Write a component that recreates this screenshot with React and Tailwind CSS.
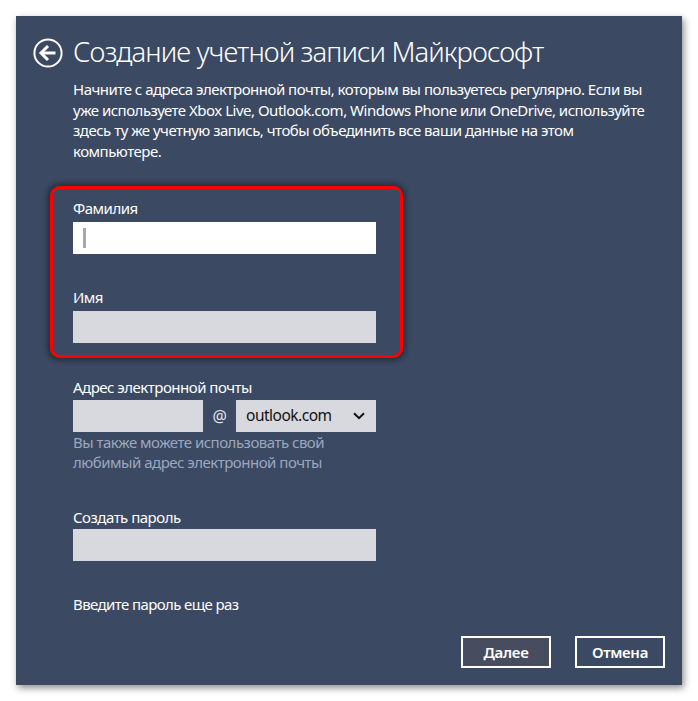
export default function App() {
  const font = { fontFamily: '"Noto Sans", "Open Sans", sans-serif' };
  return (
    <div className="w-[698px] h-[701px] bg-white pt-4 pl-4" style={font}>
      <div className="w-[666px] h-[669px] bg-[#3b4962] shadow-[2px_3px_7px_rgba(0,0,0,0.45)] flex flex-col text-white">
        <div className="flex items-center pl-[17px] pt-[18px]">
          <svg width="30" height="30" viewBox="0 0 30 30" className="mt-[2px]">
            <circle cx="15" cy="15" r="13.6" fill="none" stroke="white" strokeWidth="2" />
            <path d="M8 15 H22.5" stroke="white" strokeWidth="3" fill="none" />
            <path d="M15 8 L8 15 L15 22" stroke="white" strokeWidth="3" fill="none" strokeLinejoin="miter" />
          </svg>
          <h1 className="ml-[10px] text-[27.5px] leading-[36px] font-light tracking-[-0.9px] whitespace-nowrap">Создание учетной записи Майкрософт</h1>
        </div>
        <p className="pl-[57px] mt-[9px] text-[15px] leading-[20.5px] tracking-[-0.5px] whitespace-nowrap">
          Начните с адреса электронной почты, которым вы пользуетесь регулярно. Если вы
          <br />
          уже используете Xbox Live, Outlook.com, Windows Phone или OneDrive, используйте
          <br />
          здесь ту же учетную запись, чтобы объединить все ваши данные на этом
          <br />
          компьютере.
        </p>
        <div className="ml-[34px] mt-[25px] w-[353px] border-[3px] border-[#ff0000] rounded-[10px] pl-[20px] pr-[24px] pt-[9px] pb-[12px] shadow-[0_0_6px_2px_rgba(0,0,0,0.45)]">
          <div className="text-[15px] leading-[20px] tracking-[-0.5px]">Фамилия</div>
          <div className="mt-[4px] h-[32px] bg-white flex items-center pl-[10px]">
            <div className="w-[3px] h-[20px] bg-[#a8a8a8]" />
          </div>
          <div className="mt-[33px] text-[15px] leading-[20px] tracking-[-0.5px]">Имя</div>
          <div className="mt-[4px] h-[32px] bg-[#d8d9de]" />
        </div>
        <div className="pl-[57px] text-[15px] tracking-[-0.5px]">
          <div className="mt-[19px] leading-[20px]">Адрес электронной почты</div>
          <div className="mt-[3px] flex items-center h-[32px]">
            <div className="w-[130px] h-[32px] bg-[#d8d9de]" />
            <div className="w-[33px] text-center text-[16px] text-[#e0e4ec]">@</div>
            <div className="w-[140px] h-[32px] bg-[#d8d9de] flex items-center justify-between pl-[10px] pr-[11px] text-[#111] text-[15.5px]">
              <span>outlook.com</span>
              <svg width="12" height="8" viewBox="0 0 12 8">
                <path d="M1 1.2 L6 6.2 L11 1.2" stroke="#111" strokeWidth="2" fill="none" />
              </svg>
            </div>
          </div>
          <div className="leading-[20px] text-[#9ba7bf]">
            Вы также можете использовать свой
            <br />
            любимый адрес электронной почты
          </div>
          <div className="mt-[35px] leading-[20px]">Создать пароль</div>
          <div className="mt-[2px] w-[303px] h-[32px] bg-[#d8d9de]" />
          <div className="mt-[33px] leading-[20px] tracking-[-0.6px]">Введите пароль еще раз</div>
        </div>
        <div className="mt-[22px] flex justify-end gap-[24px] pr-[17px]">
          <button className="w-[90px] h-[32px] border-2 border-white bg-[#474d5e] text-[15px] font-semibold tracking-[-0.3px] text-white">Далее</button>
          <button className="w-[90px] h-[32px] border-2 border-white bg-[#3b4962] text-[15px] font-semibold tracking-[-0.3px] text-white">Отмена</button>
        </div>
      </div>
    </div>
  );
}
